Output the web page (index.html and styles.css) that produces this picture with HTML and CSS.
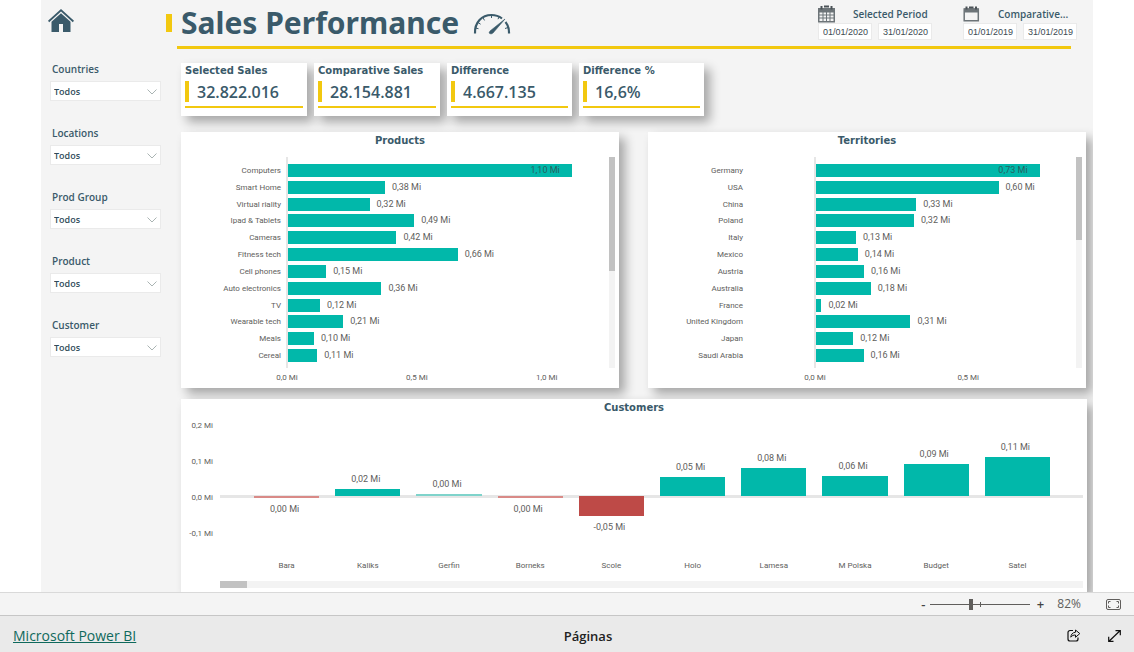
FILE: index.html
```html
<!DOCTYPE html>
<html lang="en">
<head>
<meta charset="utf-8">
<title>Sales Performance</title>
<meta name="viewport" content="width=device-width, initial-scale=1">
<link rel="stylesheet" href="styles.css">
</head>
<body>
<svg class="defs" aria-hidden="true">
  <symbol id="chevron" viewBox="0 0 10 6"><path d="M.5.5 5 5 9.500.5" fill="none" stroke="currentColor"/></symbol>
</svg>
<div class="viewport">
  <div class="page">
    <header class="header">
      <a class="home" href="#" aria-label="Home">
        <svg width="26" height="24" viewBox="0 0 26 24" fill="#3a5a6a"><path d="M13 0 0 11.800l1.200 1.400L13 2.500l11.800 10.700L26 11.800z"/><path d="M13 4.200 3.500 12.800V23H11v-8h4v8h7.500V12.800z"/></svg>
      </a>
      <span class="mark"></span>
      <h1 class="title">Sales Performance</h1>
      <svg class="gauge" width="38" height="22" viewBox="0 0 38 22" fill="none" stroke="#3a5a6a">
        <path d="M2 20.500C1.500 9 9 2 18.500 2 23 2 26 3.200 29 5.500" stroke-width="2.200"/>
        <path d="M32.500 9c2.500 3 3.700 7 3.500 11.500" stroke-width="2.200"/>
        <path d="M2.500 15l3 .7M5 9.500l2.600 1.700M10 4.800l1.500 2.600M18.500 2v3M26 4l-1 2.200M35 14.500l-3 1"/>
        <path d="M32 6 17 18l-1 2 2 1 2-1z" fill="#3a5a6a" stroke-width=".6"/>
      </svg>
      <div class="periods">
        <div class="period" role="group" aria-labelledby="p1">
          <div class="period-head">
            <svg width="17" height="18" viewBox="0 0 17 18"><path fill="#6d7478" d="M0 3h17v14.500H0z"/><path fill="#f4f4f4" d="M1.500 7.500h3v2h-3zm4 0h2.500v2H5.500zm3.500 0h2.500v2H9zm3.500 0h3v2h-3zm-11 3h3v2h-3zm4 0h2.500v2H5.500zm3.500 0h2.500v2H9zm3.500 0h3v2h-3zm-11 3h3v2.500h-3zm4 0h2.500v2.500H5.500zm3.500 0h2.500v2.500H9zm3.500 0h3v2.500h-3z"/><path stroke="#4b5257" stroke-width="2" d="M3.500 1v3.500M13.500 1v3.500M6 1.500h5"/></svg>
            <span class="period-name" id="p1">Selected Period</span>
          </div>
          <div class="dates"><input class="date" type="text" value="01/01/2020" aria-label="Selected from"><input class="date" type="text" value="31/01/2020" aria-label="Selected to"></div>
        </div>
        <div class="period" role="group" aria-labelledby="p2">
          <div class="period-head">
            <svg width="17" height="16" viewBox="0 0 17 16"><path fill="none" stroke="#6d7478" stroke-width="1.500" d="M1.200 3h14.100v11.800H1.200z"/><path fill="#6d7478" d="M1 2.500h14.500v4H1z"/><path stroke="#4b5257" stroke-width="2" d="M3.500.5v3M13 .5v3M6 1.500h4.500"/></svg>
            <span class="period-name" id="p2">Comparative...</span>
          </div>
          <div class="dates"><input class="date" type="text" value="01/01/2019" aria-label="Comparative from"><input class="date" type="text" value="31/01/2019" aria-label="Comparative to"></div>
        </div>
      </div>
    </header>
    <div class="rule"></div>
    <div class="body">
      <aside class="filters">
        <div class="filter"><label class="filter-name" for="f1">Countries</label><div class="pick"><select class="select" id="f1"><option>Todos</option></select><svg class="chevron"><use href="#chevron"/></svg></div></div>
        <div class="filter"><label class="filter-name" for="f2">Locations</label><div class="pick"><select class="select" id="f2"><option>Todos</option></select><svg class="chevron"><use href="#chevron"/></svg></div></div>
        <div class="filter"><label class="filter-name" for="f3">Prod Group</label><div class="pick"><select class="select" id="f3"><option>Todos</option></select><svg class="chevron"><use href="#chevron"/></svg></div></div>
        <div class="filter"><label class="filter-name" for="f4">Product</label><div class="pick"><select class="select" id="f4"><option>Todos</option></select><svg class="chevron"><use href="#chevron"/></svg></div></div>
        <div class="filter"><label class="filter-name" for="f5">Customer</label><div class="pick"><select class="select" id="f5"><option>Todos</option></select><svg class="chevron"><use href="#chevron"/></svg></div></div>
      </aside>
      <main class="main">
        <section class="cards">
          <article class="card"><h2 class="caption">Selected Sales</h2><p class="figure">32.822.016</p></article>
          <article class="card"><h2 class="caption">Comparative Sales</h2><p class="figure">28.154.881</p></article>
          <article class="card"><h2 class="caption">Difference</h2><p class="figure">4.667.135</p></article>
          <article class="card"><h2 class="caption">Difference %</h2><p class="figure">16,6%</p></article>
        </section>
        <div class="charts">
          <section class="panel">
            <h2 class="caption centered">Products</h2>
            <div class="hchart products">
              <ul class="names"><li>Computers</li><li>Smart Home</li><li>Virtual riality</li><li>Ipad &amp; Tablets</li><li>Cameras</li><li>Fitness tech</li><li>Cell phones</li><li>Auto electronics</li><li>TV</li><li>Wearable tech</li><li>Meals</li><li>Cereal</li></ul>
              <ul class="bars">
                <li><span class="bar inside" style="width:88.4%">1,10 Mi</span></li>
                <li><span class="bar" style="width:30.2%"></span>0,38 Mi</li>
                <li><span class="bar" style="width:25.4%"></span>0,32 Mi</li>
                <li><span class="bar" style="width:39.3%"></span>0,49 Mi</li>
                <li><span class="bar" style="width:33.8%"></span>0,42 Mi</li>
                <li><span class="bar" style="width:52.9%"></span>0,66 Mi</li>
                <li><span class="bar" style="width:11.9%"></span>0,15 Mi</li>
                <li><span class="bar" style="width:29.1%"></span>0,36 Mi</li>
                <li><span class="bar" style="width:10%"></span>0,12 Mi</li>
                <li><span class="bar" style="width:17.2%"></span>0,21 Mi</li>
                <li><span class="bar" style="width:8.1%"></span>0,10 Mi</li>
                <li><span class="bar" style="width:9.1%"></span>0,11 Mi</li>
              </ul>
              <div class="vscroll"><div class="thumb" style="height:54%"></div></div>
              <div class="xticks"><span>0,0 Mi</span><span>0,5 Mi</span><span>1,0 Mi</span></div>
            </div>
          </section>
          <section class="panel">
            <h2 class="caption centered">Territories</h2>
            <div class="hchart territories">
              <ul class="names"><li>Germany</li><li>USA</li><li>China</li><li>Poland</li><li>Italy</li><li>Mexico</li><li>Austria</li><li>Australia</li><li>France</li><li>United Kingdom</li><li>Japan</li><li>Saudi Arabia</li></ul>
              <ul class="bars">
                <li><span class="bar inside" style="width:86%">0,73 Mi</span></li>
                <li><span class="bar" style="width:70.2%"></span>0,60 Mi</li>
                <li><span class="bar" style="width:38.6%"></span>0,33 Mi</li>
                <li><span class="bar" style="width:37.7%"></span>0,32 Mi</li>
                <li><span class="bar" style="width:15.4%"></span>0,13 Mi</li>
                <li><span class="bar" style="width:16.1%"></span>0,14 Mi</li>
                <li><span class="bar" style="width:18.5%"></span>0,16 Mi</li>
                <li><span class="bar" style="width:21.1%"></span>0,18 Mi</li>
                <li><span class="bar" style="width:2.1%"></span>0,02 Mi</li>
                <li><span class="bar" style="width:36.3%"></span>0,31 Mi</li>
                <li><span class="bar" style="width:14.3%"></span>0,12 Mi</li>
                <li><span class="bar" style="width:18.3%"></span>0,16 Mi</li>
              </ul>
              <div class="vscroll"><div class="thumb" style="height:39.4%"></div></div>
              <div class="xticks"><span>0,0 Mi</span><span>0,5 Mi</span></div>
            </div>
          </section>
        </div>
        <section class="panel customers">
          <h2 class="caption centered">Customers</h2>
          <div class="vchart">
            <div class="yticks"><span>0,2 Mi</span><span>0,1 Mi</span><span>0,0 Mi</span><span>-0,1 Mi</span></div>
            <div class="columns">
              <div class="col"><div class="up"></div><div class="down"><i class="loss faint" style="height:2px"></i><span>0,00 Mi</span></div><b>Bara</b></div>
              <div class="col"><div class="up"><span>0,02 Mi</span><i class="gain" style="height:7px"></i></div><div class="down"></div><b>Kaliks</b></div>
              <div class="col"><div class="up"><span>0,00 Mi</span><i class="gain faint" style="height:2px"></i></div><div class="down"></div><b>Gerfin</b></div>
              <div class="col"><div class="up"></div><div class="down"><i class="loss faint" style="height:2px"></i><span>0,00 Mi</span></div><b>Borneks</b></div>
              <div class="col"><div class="up"></div><div class="down"><i class="loss" style="height:20px"></i><span>-0,05 Mi</span></div><b>Scole</b></div>
              <div class="col"><div class="up"><span>0,05 Mi</span><i class="gain" style="height:19px"></i></div><div class="down"></div><b>Holo</b></div>
              <div class="col"><div class="up"><span>0,08 Mi</span><i class="gain" style="height:28px"></i></div><div class="down"></div><b>Lamesa</b></div>
              <div class="col"><div class="up"><span>0,06 Mi</span><i class="gain" style="height:20px"></i></div><div class="down"></div><b>M Polska</b></div>
              <div class="col"><div class="up"><span>0,09 Mi</span><i class="gain" style="height:32px"></i></div><div class="down"></div><b>Budget</b></div>
              <div class="col"><div class="up"><span>0,11 Mi</span><i class="gain" style="height:39px"></i></div><div class="down"></div><b>Satel</b></div>
            </div>
            <div class="hscroll"><div class="thumb" style="width:3.1%"></div></div>
          </div>
        </section>
      </main>
    </div>
  </div>
</div>
<div class="zoombar">
  <button class="step" aria-label="Zoom out">-</button>
  <input class="zoom" type="range" min="0" max="100" value="40" aria-label="Zoom">
  <button class="step" aria-label="Zoom in">+</button>
  <output class="percent">82%</output>
  <button class="icon-btn" aria-label="Fit to page"><svg width="15" height="11" viewBox="0 0 15 11" fill="none" stroke="#605e5c"><rect x=".5" y=".5" width="14" height="10" rx="1.500"/><path d="M2.500 4.500v-2h2M2.500 6.500v2h2M12.500 4.500v-2h-2M12.500 6.500v2h-2"/></svg></button>
</div>
<footer class="footer">
  <a class="brand" href="#">Microsoft Power BI</a>
  <span class="pages">Páginas</span>
  <div class="actions">
    <button class="icon-btn" aria-label="Share"><svg width="14" height="13" viewBox="0 0 14 13" fill="none" stroke="#111"><path d="M6 1.500H3A2 2 0 0 0 1 3.500v6.500a2 2 0 0 0 2 2h6a2 2 0 0 0 2-2V8.500" stroke-width="1.200"/><path d="M8.500 1v2.200C5.500 3.500 4 5.500 3.800 8.200 5 6.500 6.500 6 8.500 6v2.300L12.800 4.600z" stroke-linejoin="round"/></svg></button>
    <button class="icon-btn" aria-label="Full screen"><svg width="13" height="12" viewBox="0 0 13 12" fill="none" stroke="#111" stroke-width="1.200"><path d="M1 11.300 12 .7M7.500.6H12.300v4.600M.7 6.800v4.600h4.800"/></svg></button>
  </div>
</footer>
</body>
</html>
```
FILE: styles.css
```css
:root {
  --ink: #3a5a6a;
  --yellow: #f2c80f;
  --teal: #01b8aa;
  --red: #be4a47;
  --ui: "Open Sans", "Noto Sans", sans-serif;
  --din: Roboto, sans-serif;
}
* { box-sizing: border-box; }
body {
  margin: 0;
  height: 100vh;
  display: flex;
  flex-direction: column;
  background: #fff;
  color: var(--ink);
  font-family: var(--ui);
}
h1, h2, p, ul { margin: 0; padding: 0; }
ul { list-style: none; }
button { border: 0; padding: 0; background: none; }
.defs { display: none; }

.viewport { flex: 1; min-height: 0; overflow: hidden; padding: 0 41px; display: flex; }
.page { flex: 1; min-width: 0; overflow: hidden; background: #f4f4f4; display: flex; flex-direction: column; }

.header { display: flex; height: 46px; flex: none; padding-right: 16px; }
.home { width: 125px; padding: 9px 0 0 7px; }
.home svg { display: block; }
.mark { width: 6px; height: 18px; margin-top: 14px; background: var(--yellow); }
.title { margin-left: 9px; font: 700 30px/46px "Noto Sans", sans-serif; white-space: nowrap; }
.gauge { margin: 13px 0 0 14px; flex: none; }
.periods { margin-left: auto; display: flex; gap: 31px; }
.period { padding-top: 5px; }
.period-head { display: flex; align-items: center; height: 18px; gap: 18px; }
.period-name { font-size: 10px; line-height: 18px; font-weight: 600; white-space: nowrap; }
.dates { display: flex; gap: 6px; }
.date { width: 54px; height: 17px; padding: 0 0 0 4px; border: 1px solid #eaeaea; background: #fff; color: #3b4a52; font: 9px "Liberation Sans", Arial, sans-serif; }
.rule { flex: none; height: 3px; margin: 0 22px 0 136px; background: var(--yellow); }

.body { display: flex; flex: 1; }
.filters { width: 140px; flex: none; padding: 12px 20px 0 9px; display: flex; flex-direction: column; gap: 24px; }
.filter-name { display: block; padding-left: 2px; margin-bottom: 4px; font-size: 10px; line-height: 16px; font-weight: 600; }
.pick { position: relative; }
.select { display: block; width: 100%; height: 20px; padding: 0 3px; border: 1px solid #eaeaea; border-radius: 0; appearance: none; background: #fff; color: #2f4b59; font: 600 9px var(--ui); }
.chevron { position: absolute; right: 4px; top: 8px; width: 10px; height: 6px; color: #aab4b3; pointer-events: none; }

.main { flex: 1; min-width: 0; padding: 14px 6px 0 0; display: flex; flex-direction: column; }
.card, .panel { background: #fff; box-shadow: 6px 6px 10px rgba(0, 0, 0, .32); }
.cards { display: grid; grid-template-columns: 126px 126px 125px 125px; gap: 7px; margin-bottom: 16px; }
.card { padding: 0 4px 8px; }
.caption { height: 16px; font: 700 10px/18px "DejaVu Sans", Verdana, sans-serif; white-space: nowrap; }
.card .caption { line-height: 16px; margin-bottom: 2px; }
.centered { text-align: center; }
.figure { height: 21px; font-size: 16px; line-height: 23px; font-weight: 600; padding-left: 8px; border-left: 4px solid var(--yellow); }
.card::after { content: ""; display: block; margin-top: 4px; height: 2px; background: var(--yellow); }

.charts { display: grid; grid-template-columns: 1fr 1fr; gap: 29px; margin-bottom: 11px; padding-right: 1px; }
.hchart { display: grid; grid-template-rows: 211px 20px; padding: 9px 4px 0 0; font-family: var(--din); color: #605e5c; }
.products { grid-template-columns: 105px 1fr 6px; --step: 40.2%; --name-gap: 5px; }
.territories { grid-template-columns: 166px 1fr 6px; --step: 58.5%; --name-gap: 71px; }
.names, .bars { display: grid; grid-template-rows: repeat(12, 1fr); align-items: center; padding: 5px 0 4px; }
.names { padding-right: var(--name-gap); text-align: right; font-size: 8px; line-height: 13px; white-space: nowrap; }
.bars { border-left: 2px solid #e6e6e6; font-size: 9px; line-height: 13px; }
.bars li { display: flex; white-space: nowrap; }
.bar { height: 13px; flex: none; margin-right: 7px; background: var(--teal); }
.inside { text-align: right; padding-right: 12px; color: #28605f; }
.vscroll { background: #f3f3f3; }
.thumb { height: 100%; background: #c2c2c2; }
.xticks { grid-column: 2; display: flex; font-size: 8px; line-height: 20px; }
.xticks span { flex: none; width: var(--step); text-align: center; }
.xticks span:first-child { margin-left: calc(var(--step) / -2 + 1px); }

.customers { flex: 1; }
.vchart { display: grid; grid-template-columns: 39px 1fr; padding-right: 4px; font-family: var(--din); color: #605e5c; }
.yticks { display: flex; flex-direction: column; gap: 16px; padding: 1px 7px 0 0; text-align: right; font-size: 8px; line-height: 20px; white-space: nowrap; }
.columns { display: grid; grid-template-columns: repeat(10, 1fr); padding: 0 25px 0 26px; background: linear-gradient(#e6e6e6, #e6e6e6) 0 80px / 100% 3px no-repeat; }
.col { display: grid; grid-template-rows: 82px 60px 18px; text-align: center; }
.up, .down { display: flex; flex-direction: column; font-size: 9px; line-height: 12px; padding: 0 8px; }
.up { justify-content: flex-end; padding-bottom: 1px; }
.up span { margin: 0 4px 4px 0; }
.down { margin-top: -1px; }
.down span { margin: 5px 4px 0 0; }
.col b { font-size: 8px; line-height: 18px; font-weight: 400; }
.gain { background: var(--teal); }
.loss { background: var(--red); }
.gain.faint { background: #7fd3cb; }
.loss.faint { background: #d98a87; }
.hscroll { grid-column: 2; height: 7px; margin-top: 6px; background: #f3f3f3; }

.zoombar { flex: none; height: 23px; display: flex; align-items: center; justify-content: flex-end; padding-right: 13px; border-top: 1px solid #d9d9d9; background: #f4f4f4; color: #605e5c; }
.step { width: 8px; color: #444; font: 600 13px/20px var(--ui); }
.zoom { width: 100px; height: 11px; margin: 0 6px 0 3px; appearance: none; background: linear-gradient(#605e5c, #605e5c) 50px 50% / 1px 5px no-repeat, linear-gradient(#605e5c, #605e5c) 0 5px / 100% 1px no-repeat; }
.zoom::-webkit-slider-thumb { appearance: none; width: 4px; height: 11px; background: #605e5c; }
.percent { margin: 0 25px 0 13px; font-size: 12px; line-height: 20px; font-weight: 400; }
.icon-btn { display: block; line-height: 0; }
.footer { flex: none; height: 37px; display: grid; grid-template-columns: 1fr auto 1fr; align-items: center; padding: 3px 13px 0; border-top: 1px solid #c6c6c6; background: #eaeaea; }
.brand { color: #0f695c; font-size: 14px; line-height: 20px; }
.pages { padding-left: 42px; color: #222; font-size: 13px; line-height: 20px; font-weight: 600; }
.actions { display: flex; justify-content: flex-end; align-items: center; gap: 27px; }
```
